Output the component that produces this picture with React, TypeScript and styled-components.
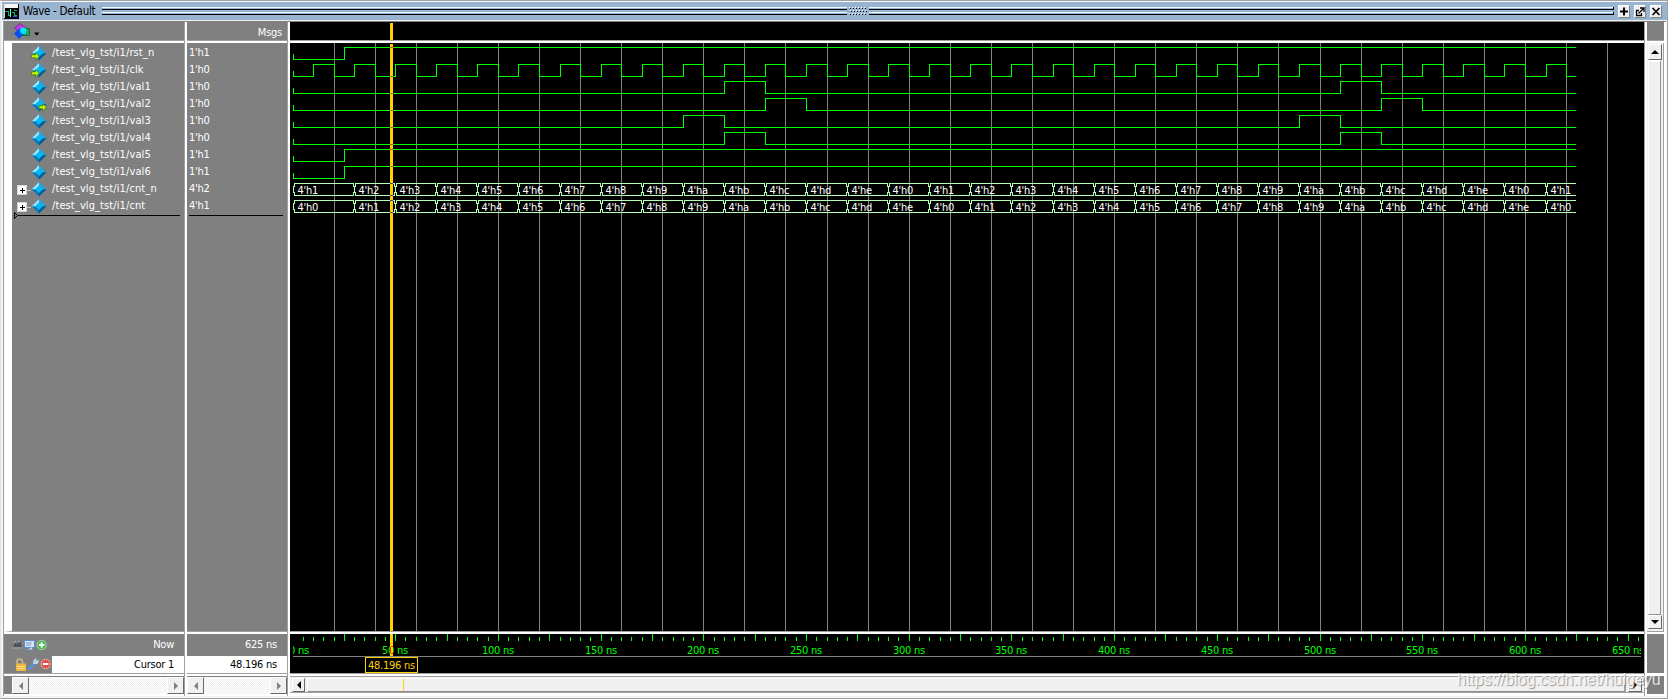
import React from "react";
import styled, { createGlobalStyle } from "styled-components";

const Global = createGlobalStyle`
  * { box-sizing: border-box; }
  html, body { margin: 0; padding: 0; overflow: hidden; }
  body, text {
    font-family: "DejaVu Sans Condensed", "DejaVu Sans", sans-serif;
    font-stretch: condensed;
    font-size: 11px;
    letter-spacing: -0.25px;
  }
  svg { display: block; }
`;

const Frame = styled.div`
  width: 1668px;
  height: 699px;
  display: flex;
  flex-direction: column;
  background: #f4f4f4;
  border: 1px solid #a0a0a0;
  border-left-color: #e4e4e4;
`;

const TitleBar = styled.div`
  height: 20px;
  flex: none;
  margin-left: 1px;
  display: flex;
  align-items: center;
  background: #99b4d1;
  border-top: 1px solid #f8f8f8;
  border-bottom: 1px solid #f0f0f0;
  padding: 0 5px 0 2px;
`;

const Title = styled.div`
  width: 83px;
  flex: none;
  padding-left: 4px;
  font-size: 11.5px;
  line-height: 16px;
  letter-spacing: -0.3px;
  color: #000;
  white-space: nowrap;
`;

const Grip = styled.div`
  flex: 1;
  height: 18px;
`;

const TitleButtons = styled.div`
  display: flex;
  gap: 4px;
  margin-left: 4px;
`;

const TitleButton = styled.div`
  width: 12px;
  height: 13px;
  background: #f0f0f0;
  border: 1px solid #fff;
  border-right-color: #808080;
  border-bottom-color: #808080;
`;

const Columns = styled.div`
  display: grid;
  grid-template-columns: 180px 100px 1354px 17px;
  column-gap: 3px;
  height: 675px;
  width: 1663px;
  margin-left: 2px;
  border-top: 1px solid #808080;
  border-left: 1px solid #a0a0a0;
  background: linear-gradient(90deg,
    #fff 0 180px, #a0a0a0 180px 181px, #fff 181px 283px, #a0a0a0 283px 284px,
    #fff 284px 1640px, #a0a0a0 1640px 1641px, #fff 1641px);
`;

const Pane = styled.div`
  display: flex;
  flex-direction: column;
  min-width: 0;
`;

const Header = styled.div<{ $bg?: string }>`
  height: 19px;
  margin-bottom: 2px;
  background: ${(p) => p.$bg ?? "#808080"};
  border-bottom: 1px solid #a0a0a0;
  display: flex;
  align-items: center;
  color: #fff;
`;

const ToolPad = styled.div`
  padding-left: 10px;
`;

const MsgTitle = styled.span`
  margin-left: auto;
  padding: 2px 5px 0 0;
`;

const Body = styled.div<{ $strip?: boolean }>`
  height: 589px;
  margin-bottom: 2px;
  border-bottom: 1px solid #a0a0a0;
  background: #808080;
  ${(p) => p.$strip && "border-left: 8px solid #fff;"}
  padding-top: 1px;
`;

const SignalRow = styled.div`
  height: 17px;
  display: flex;
  align-items: center;
  color: #fff;
  line-height: 17px;
  white-space: pre;
`;

const Branch = styled.div`
  width: 19px;
  height: 17px;
  flex: none;
`;

const SignalName = styled.span`
  padding-left: 5px;
  letter-spacing: 0.1px;
`;

const Value = styled.span`
  padding-left: 2px;
`;

const EndMark = styled.div<{ $width: number }>`
  width: ${(p) => p.$width}px;
  height: 1px;
  background: #000;
`;

const EndFlag = styled.div`
  height: 7px;
  display: flex;
  align-items: center;
  margin: -2px 0 0 2px;
`;

const Footer = styled.div`
  height: 40px;
  margin-bottom: 2px;
  background: #808080;
  border-bottom: 1px solid #a0a0a0;
`;

const NowRow = styled.div`
  height: 22px;
  display: flex;
  align-items: center;
  justify-content: space-between;
  padding: 0 10px 1px 8px;
  color: #fff;
`;

const CursorRow = styled.div`
  height: 17px;
  display: flex;
  color: #000;
`;

const CursorTools = styled.div`
  width: 48px;
  padding-left: 10px;
`;

const CursorCell = styled.div`
  flex: 1;
  background: #fff;
  text-align: right;
  padding-right: 10px;
  line-height: 17px;
`;

const ScrollRow = styled.div<{ $left?: number }>`
  height: 18px;
  display: flex;
  padding: 1px 0 0 ${(p) => p.$left ?? 0}px;
  background: #808080;
`;

const ArrowButton = styled.div<{ $w: number; $h: number }>`
  width: ${(p) => p.$w}px;
  height: ${(p) => p.$h}px;
  flex: none;
  display: flex;
  align-items: center;
  justify-content: center;
  background: #f0f0f0;
  border: 1px solid #fff;
  border-right-color: #696969;
  border-bottom-color: #696969;
`;

const Trough = styled.div`
  flex: 1;
  background: repeating-conic-gradient(#fff 0 25%, #f0f0f0 0 50%) 0 0 / 2px 2px;
`;

const HScroll = styled.div`
  height: 17px;
  display: flex;
  align-items: center;
  gap: 2px;
  padding: 0 2px;
  background: #f0f0f0;
  border: 1px solid #a0a0a0;
  border-left: 0;
  border-right: 0;
`;

const HThumb = styled.div`
  flex: 1;
  height: 14px;
  background: #f0f0f0;
  border: 1px solid #fff;
  border-right: 2px solid #a0a0a0;
  border-bottom: 1px solid #909090;
  padding-left: 95px;
`;

const HThumbMark = styled.div`
  width: 1px;
  height: 12px;
  background: #ffd200;
`;

const VScroll = styled.div`
  height: 588px;
  margin-bottom: 3px;
  display: flex;
  flex-direction: column;
  padding: 1px 2px 2px 1px;
  background: #f0f0f0;
  border-right: 1px solid #a0a0a0;
  box-shadow: 0 1px #a0a0a0;
`;

const VThumb = styled.div`
  flex: 1;
  background: #f0f0f0;
  border: 1px solid #fff;
  border-top-width: 2px;
  border-right: 1px solid #909090;
  border-bottom: 1px solid #909090;
`;

const Filler = styled.div<{ $h: number; $gap?: number }>`
  height: ${(p) => p.$h}px;
  margin-bottom: ${(p) => p.$gap ?? 0}px;
  background: #808080;
`;

const CanvasFrame = styled.div`
  margin-bottom: 2px;
  border-bottom: 1px solid #a0a0a0;
`;

const Watermark = styled.div`
  position: absolute;
  left: 1457px;
  top: 670px;
  font: 16px/20px "Liberation Sans", sans-serif;
  letter-spacing: 0;
  color: rgba(255, 255, 255, 0.8);
  text-shadow: 1px 1px 1px rgba(110, 110, 110, 0.7);
  white-space: nowrap;
`;

const PX_PER_NS = 2.0541;
const ORIGIN = 3;
const END = 625;
const CURSOR_X = 100;
const xAt = (t: number) => Math.floor(ORIGIN + t * PX_PER_NS);

type Port = "in" | "out" | "none";
type Signal = { name: string; value: string; port: Port; edges?: number[]; bus?: number };

const clockEdges = Array.from({ length: 62 }, (_, i) => 10 + i * 10);

const signals: Signal[] = [
  { name: "rst_n", value: "1'h1", port: "in", edges: [25] },
  { name: "clk", value: "1'h0", port: "in", edges: clockEdges },
  { name: "val1", value: "1'h0", port: "none", edges: [210, 230, 510, 530] },
  { name: "val2", value: "1'h0", port: "out", edges: [230, 250, 530, 550] },
  { name: "val3", value: "1'h0", port: "none", edges: [190, 210, 490, 510] },
  { name: "val4", value: "1'h0", port: "none", edges: [210, 230, 510, 530] },
  { name: "val5", value: "1'h1", port: "none", edges: [25] },
  { name: "val6", value: "1'h1", port: "none", edges: [25] },
  { name: "cnt_n", value: "4'h2", port: "none", bus: 1 },
  { name: "cnt", value: "4'h1", port: "none", bus: 0 },
];

function WindowIcon() {
  return (
    <svg width="15" height="15" shapeRendering="crispEdges">
      <rect width="15" height="15" fill="#000" />
      <rect x="0" y="0" width="14" height="4" fill="#f4f4f4" />
      <rect x="0" y="0" width="1" height="14" fill="#ddd" />
      <path d="M1 7.5H4.5V11.5H7M8 8.5H10.5V11.5H13M10 6.5H13" stroke="#18b060" fill="none" />
      <path d="M6.5 5V13" stroke="#5ff" />
      <path d="M9 12.5H13" stroke="#44f" />
    </svg>
  );
}

function ObjectsIcon() {
  return (
    <svg width="28" height="18">
      <path d="M6 1.5L12 6L6 10L0.5 6Z" fill="#c03ce4" stroke="#6a1a98" strokeWidth=".7" />
      <rect x="8.5" y="6.5" width="7" height="7" fill="#20a850" stroke="#086030" strokeWidth=".7" />
      <path d="M5 6.5L10.5 11.5L5 17L0 11.5Z" fill="#0850ec" />
      <circle cx="9.3" cy="8.8" r="3.2" fill="#00e4f8" />
      <path d="M20 10.5H25.5L22.7 13.8Z" fill="#000" />
    </svg>
  );
}

function SignalIcon({ port }: { port: Port }) {
  return (
    <svg width="16" height="17">
      <path d="M8 2L15.3 9.2L8 16.5L.7 9.2Z" fill="#0878b8" />
      <path d="M8 2L.7 9.2H5L8 6.2Z" fill="#9be4fa" />
      <path d="M8 2L15.3 9.2H11L8 6.2Z" fill="#28a8e0" />
      <path d="M8 16.5L15.3 9.2H11L8 12.5Z" fill="#045c94" />
      <path d="M8 5.5L11.8 9.2L8 13L4.2 9.2Z" fill="#00baf4" />
      {port === "in" && <path d="M.5 10.8H4.5V8.6L8.3 12.3L4.5 16V13.7H.5Z" fill="#c4f400" stroke="#2c7800" strokeWidth=".7" />}
      {port === "out" && <path d="M8 10.8H11.5V8.6L15.4 12.3L11.5 16V13.7H8Z" fill="#c4f400" stroke="#2c7800" strokeWidth=".7" />}
    </svg>
  );
}

function Expander() {
  return (
    <svg width="19" height="17" shapeRendering="crispEdges">
      <path d="M15 10.5H19" stroke="#c8c8c8" />
      <rect x="5.5" y="5.5" width="9" height="9" fill="#fff" stroke="#d0d4dc" />
      <path d="M8 10.5H13M10.5 8V13" stroke="#000" />
    </svg>
  );
}

function NowTools() {
  return (
    <svg width="36" height="14">
      <path d="M1 9L3 4L5 6L8 2L10 9Z" fill="#4c555c" />
      <path d="M2 5L4 3M6 4L8 3" stroke="#b0c8d0" />
      <path d="M0 10H10" stroke="#a8b4bc" strokeWidth="1.2" strokeDasharray="2 1" />
      <rect x="12.5" y="2.5" width="10" height="7" fill="#d4e4f6" stroke="#5c8ed0" />
      <path d="M14 5H20M14 7H19" stroke="#8098b8" />
      <path d="M15 12H21L20 9" fill="#cad8ea" stroke="#6a88b0" />
      <circle cx="29.7" cy="7" r="4.6" fill="#48b450" stroke="#a4dca0" />
      <path d="M27 7H32.4M29.7 4.3V9.7" stroke="#fff" strokeWidth="1.8" />
    </svg>
  );
}

function CursorToolIcons() {
  return (
    <svg width="38" height="17">
      <path d="M3 8V5.5Q3 3 5.5 3T8.5 5.5V8" fill="none" stroke="#c8b68a" strokeWidth="1.6" />
      <rect x="2" y="7.5" width="10" height="7.5" rx="1" fill="#f0b83c" />
      <path d="M3 10.5H11M3 12.5H11" stroke="#ffe08c" />
      <path d="M15.5 12.5L20.5 7.5" stroke="#5a90e0" strokeWidth="3" strokeLinecap="round" />
      <path d="M19 8L19.5 4L22 2.2L22.6 4.6L25.4 4.6L23.5 8Z" fill="#c0d0e4" />
      <circle cx="31.7" cy="8" r="4.6" fill="#e44c48" stroke="#f0a4a0" />
      <path d="M29 8H34.4" stroke="#fff" strokeWidth="2" />
    </svg>
  );
}

function Arrow({ dir, color = "#000" }: { dir: "left" | "right" | "up" | "down"; color?: string }) {
  const shapes = {
    left: "M6 0V8L2 4Z",
    right: "M2 0V8L6 4Z",
    up: "M0 6H8L4 2Z",
    down: "M0 2H8L4 6Z",
  };
  return (
    <svg width="8" height="8">
      <path d={shapes[dir]} fill={color} />
    </svg>
  );
}

function GripLines() {
  const dots: React.ReactNode[] = [];
  [7, 10, 13].forEach((y, r) => {
    for (let i = 0; i < 6; i++) {
      const x = 747 + i * 3 + (r === 1 ? 1 : 0);
      dots.push(<rect key={`w${x}-${y}`} x={x} y={y - 2} width="1" height="1" fill="#fff" />);
      dots.push(<rect key={`b${x}-${y}`} x={x + 1} y={y - 1} width="1" height="1" fill="#000" />);
    }
  });
  return (
    <svg width="1512" height="18" shapeRendering="crispEdges">
      {[5, 10].map((y) => (
        <g key={y}>
          <path d={`M0 ${y + 0.5}H745M767 ${y + 0.5}H1511`} stroke="#e4ffff" />
          <path d={`M0 ${y + 2.5}H745M767 ${y + 2.5}H1512`} stroke="#000" />
          <path d={`M1511.5 ${y}V${y + 3}`} stroke="#000" />
        </g>
      ))}
      {dots}
    </svg>
  );
}

function digitalPath(edges: number[], row: number) {
  const high = 4.5 + row * 17;
  const low = high + 12;
  let level = 0;
  let d = `M${ORIGIN + 0.5} ${low - 5.5}V${low}`;
  edges.forEach((t) => {
    const x = xAt(t) + 0.5;
    level = 1 - level;
    d += `H${x}V${level ? high : low}`;
  });
  return d + `H${xAt(END)}`;
}

function Bus({ first, row }: { first: number; row: number }) {
  const top = 4.5 + row * 17;
  const bottom = top + 12;
  const starts = [0, ...Array.from({ length: 30 }, (_, i) => 30 + i * 20)];
  return (
    <>
      {starts.map((t, i) => {
        const a = xAt(t) + 0.5;
        const last = i === starts.length - 1;
        const b = last ? xAt(END) : xAt(starts[i + 1]) + 0.5;
        const d = last
          ? `M${b} ${top}H${a + 1}V${top + 3}H${a}V${bottom - 3}H${a + 1}V${bottom}H${b}`
          : `M${a + 1} ${top}H${b - 1}V${top + 3}H${b}V${bottom - 3}H${b - 1}V${bottom}H${a + 1}V${bottom - 3}H${a}V${top + 3}H${a + 1}Z`;
        return (
          <g key={t}>
            <path d={d} stroke="#b4ffb4" fill="none" shapeRendering="crispEdges" />
            <text x={a + 4} y={top + 10.5} fill="#fff">{`4'h${((first + i) % 15).toString(16)}`}</text>
          </g>
        );
      })}
    </>
  );
}

function crossingY(edges: number[], row: number) {
  const level = edges.filter((t) => t < 48.196).length % 2;
  return 4 + row * 17 + (level ? 0 : 12);
}

function WaveCanvas() {
  const grid = Array.from({ length: 32 }, (_, i) => xAt(20 * (i + 1)) + 0.5);
  return (
    <svg width="1354" height="588">
      <rect width="1354" height="588" fill="#000" />
      <g shapeRendering="crispEdges" fill="none">
        {grid.map((x) => (
          <path key={x} d={`M${x} 0V588`} stroke="#808080" />
        ))}
        {signals.map((s, i) => s.edges && <path key={s.name} d={digitalPath(s.edges, i)} stroke="#00ff00" />)}
      </g>
      {signals.map((s, i) => s.bus !== undefined && <Bus key={s.name} first={s.bus} row={i} />)}
      <g shapeRendering="crispEdges">
        <rect x={CURSOR_X} y="1" width="3" height="587" fill="#ffd200" />
        {signals.map((s, i) =>
          s.edges ? (
            <rect key={s.name} x={CURSOR_X} y={crossingY(s.edges, i)} width="3" height="1" fill="#ff3c00" />
          ) : (
            <g key={s.name} fill="#5a3c90">
              <rect x={CURSOR_X} y={4 + i * 17} width="3" height="1" />
              <rect x={CURSOR_X} y={16 + i * 17} width="3" height="1" />
            </g>
          )
        )}
      </g>
    </svg>
  );
}

function Ruler() {
  const ticks = Array.from({ length: 131 }, (_, i) => (i + 1) * 5);
  const labels = Array.from({ length: 14 }, (_, i) => i * 50);
  return (
    <svg width="1354" height="39">
      <rect width="1354" height="39" fill="#000" />
      <clipPath id="ruler"><rect x="3" y="0" width="1348" height="39" /></clipPath>
      <g clipPath="url(#ruler)">
        <g shapeRendering="crispEdges" stroke="#00ff00">
          {ticks.map((t) => (
            <path key={t} d={`M${xAt(t) + 0.5} ${t % 25 ? 3 : 0}V7`} />
          ))}
        </g>
        <path d="M3 22.5H1351" stroke="#808080" shapeRendering="crispEdges" />
        <rect x={CURSOR_X} y="0" width="3" height="22" fill="#ffd200" />
        {labels.map((t) => (
          <text key={t} x={t === 0 ? 9 : xAt(t)} y="20" textAnchor="middle" fill="#00ff00">{`${t} ns`}</text>
        ))}
        <rect x="100" y="12" width="3" height="8" fill="#ffd200" />
        <path d="M100.5 13V19M101 12.5H103M101 19.5H103" stroke="#ff2a00" />
      </g>
      <rect x="75.5" y="23.5" width="52" height="15" fill="#000" stroke="#ffd200" shapeRendering="crispEdges" />
      <text x="101.5" y="35" textAnchor="middle" fill="#ffd200">48.196 ns</text>
    </svg>
  );
}

export default function App() {
  return (
    <Frame>
      <Global />
      <TitleBar>
        <WindowIcon />
        <Title>Wave - Default</Title>
        <Grip><GripLines /></Grip>
        <TitleButtons>
          <TitleButton>
            <svg width="10" height="11"><path d="M1 5.5H9M5 1.5V9.5" stroke="#000" strokeWidth="2" /></svg>
          </TitleButton>
          <TitleButton>
            <svg width="10" height="11" fill="none" stroke="#000">
              <path d="M4 4.5H1.5V9.5H6.5V7M3.5 7.5L8 3M5 2H9V6" strokeWidth="1.3" />
            </svg>
          </TitleButton>
          <TitleButton>
            <svg width="10" height="11"><path d="M1.5 2L8.5 9M8.5 2L1.5 9" stroke="#000" strokeWidth="1.7" /></svg>
          </TitleButton>
        </TitleButtons>
      </TitleBar>
      <Columns>
        <Pane>
          <Header><ToolPad><ObjectsIcon /></ToolPad></Header>
          <Body $strip>
            {signals.map((s) => (
              <SignalRow key={s.name}>
                <Branch>{s.bus !== undefined && <Expander />}</Branch>
                <SignalIcon port={s.port} />
                <SignalName>{`/test_vlg_tst/i1/${s.name}`}</SignalName>
              </SignalRow>
            ))}
            <EndFlag>
              <svg width="4" height="7"><path d="M.5 .5V6.5L3.5 3.5Z" fill="none" stroke="#000" /></svg>
              <EndMark $width={162} />
            </EndFlag>
          </Body>
          <Footer>
            <NowRow><NowTools />Now</NowRow>
            <CursorRow>
              <CursorTools><CursorToolIcons /></CursorTools>
              <CursorCell>Cursor 1</CursorCell>
            </CursorRow>
          </Footer>
          <ScrollRow $left={8}>
            <ArrowButton $w={17} $h={17}><Arrow dir="left" color="#808080" /></ArrowButton>
            <Trough />
            <ArrowButton $w={17} $h={17}><Arrow dir="right" color="#808080" /></ArrowButton>
          </ScrollRow>
        </Pane>
        <Pane>
          <Header><MsgTitle>Msgs</MsgTitle></Header>
          <Body>
            {signals.map((s) => (
              <SignalRow key={s.name}><Value>{s.value}</Value></SignalRow>
            ))}
            <EndFlag><EndMark $width={94} /></EndFlag>
          </Body>
          <Footer>
            <NowRow><span />625 ns</NowRow>
            <CursorRow><CursorCell>48.196 ns</CursorCell></CursorRow>
          </Footer>
          <ScrollRow>
            <ArrowButton $w={17} $h={17}><Arrow dir="left" color="#808080" /></ArrowButton>
            <Trough />
            <ArrowButton $w={17} $h={17}><Arrow dir="right" color="#808080" /></ArrowButton>
          </ScrollRow>
        </Pane>
        <Pane>
          <Header $bg="#000">
            <svg width="110" height="18"><rect x={CURSOR_X} y="1" width="3" height="17" fill="#ffd200" /></svg>
          </Header>
          <CanvasFrame><WaveCanvas /></CanvasFrame>
          <CanvasFrame><Ruler /></CanvasFrame>
          <HScroll>
            <ArrowButton $w={13} $h={14}><Arrow dir="left" /></ArrowButton>
            <HThumb><HThumbMark /></HThumb>
            <ArrowButton $w={14} $h={14}><Arrow dir="right" /></ArrowButton>
          </HScroll>
        </Pane>
        <Pane>
          <Header />
          <VScroll>
            <ArrowButton $w={14} $h={16}><Arrow dir="up" /></ArrowButton>
            <VThumb />
            <ArrowButton $w={14} $h={14}><Arrow dir="down" /></ArrowButton>
          </VScroll>
          <Filler $h={39} $gap={3} />
          <Filler $h={18} />
        </Pane>
      </Columns>
      <Watermark>https://blog.csdn.net/huigeyu</Watermark>
    </Frame>
  );
}
